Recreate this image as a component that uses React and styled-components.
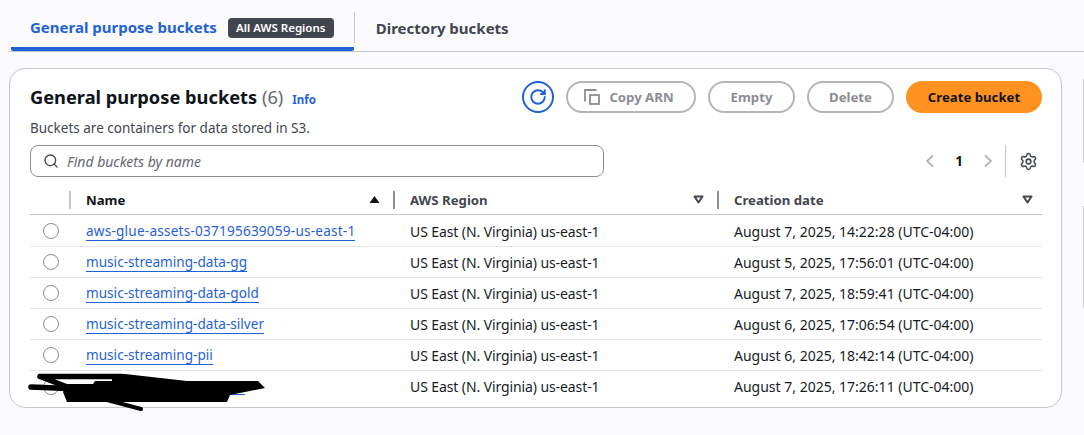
import styled, { createGlobalStyle } from "styled-components";
import { Search, Settings, RotateCw } from "lucide-react";

const Global = createGlobalStyle`
	html, body {
		margin: 0;
		background: #fbfbfe;
		font-family: "Noto Sans", "Open Sans", sans-serif;
		color: #0f141a;
	}
	* { box-sizing: border-box; }
`;

const Page = styled.div`
	position: relative;
	width: 1084px;
	height: 435px;
	overflow: hidden;
	padding-left: 9px;
`;
const Tabs = styled.div`
	display: flex;
	align-items: stretch;
	height: 52px;
	border-bottom: 1px solid #c6c6cd;
`;
const ActiveTab = styled.div`
	display: flex;
	align-items: center;
	gap: 11px;
	height: 51px;
	margin-left: 2px;
	padding: 6px 20px 0 19px;
	font-size: 15px;
	font-weight: 700;
	color: #1f62d8;
	border-bottom: 4px solid #1f62d8;
	border-radius: 2px;
`;
const PlainTab = styled.div`
	display: flex;
	align-items: center;
	height: 51px;
	padding: 8px 22px 4px 21px;
	font-size: 15px;
	font-weight: 700;
	color: #424650;
`;
const TabSep = styled.div`
	width: 1px;
	height: 31px;
	margin-top: 12px;
	background: #c6c6cd;
`;
const Badge = styled.span`
	width: 106px;
	margin-top: 3px;
	background: #424650;
	color: #fff;
	font-size: 11.5px;
	font-weight: 600;
	line-height: 20px;
	text-align: center;
	border-radius: 4px;
`;
const Card = styled.section`
	width: 1053px;
	height: 340px;
	margin-top: 16px;
	padding: 15px 19px 0 20px;
	border: 1px solid #c6c6cd;
	border-radius: 16px;
	background: #fff;
	overflow: hidden;
`;
const TopRow = styled.div`
	display: flex;
	justify-content: space-between;
	align-items: flex-start;
`;
const TitleLine = styled.div`
	display: flex;
	align-items: baseline;
	gap: 9px;
	height: 28px;
`;
const Title = styled.h2`
	margin: 0;
	font-size: 18.25px;
	line-height: 26px;
	font-weight: 700;
	span {
		color: #656871;
		font-weight: 400;
	}
`;
const Info = styled.span`
	font-size: 11.5px;
	font-weight: 700;
	color: #1f62d8;
`;
const Desc = styled.p`
	margin: 8px 0 0;
	font-size: 13.5px;
	line-height: 16px;
	color: #424650;
`;
const Actions = styled.div`
	display: flex;
	align-items: center;
	gap: 12px;
	margin-top: -3px;
`;
const RoundIcon = styled.div`
	display: flex;
	align-items: center;
	justify-content: center;
	width: 32px;
	height: 32px;
	border: 2px solid #1f62d8;
	border-radius: 50%;
	color: #1f62d8;
`;
const Button = styled.div`
	display: flex;
	align-items: center;
	justify-content: center;
	gap: 9px;
	height: 32px;
	width: ${(p) => p.$w}px;
	font-size: 13.2px;
	font-weight: 700;
	border-radius: 16px;
	border: 2px solid ${(p) => (p.$primary ? "#ff9220" : "#b4b4bb")};
	background: ${(p) => (p.$primary ? "#ff9220" : "transparent")};
	color: ${(p) => (p.$primary ? "#0f141a" : "#8c8c94")};
`;
const CopyGlyph = styled.svg`
	width: 16px;
	height: 16px;
	margin-left: -4px;
	flex: none;
`;
const ToolRow = styled.div`
	display: flex;
	justify-content: space-between;
	align-items: center;
	margin-top: 9px;
`;
const SearchBox = styled.div`
	display: flex;
	align-items: center;
	gap: 8px;
	width: 574px;
	height: 32px;
	padding-left: 12px;
	border: 1px solid #8c8c94;
	border-radius: 8px;
	font-size: 14px;
	font-style: italic;
	color: #656871;
`;
const Pager = styled.div`
	display: flex;
	align-items: center;
`;
const Chevron = styled.svg`
	width: 10px;
	height: 14px;
	flex: none;
`;
const PageNum = styled.span`
	margin: 0 20px;
	font-size: 13.5px;
	font-weight: 700;
	color: #0f141a;
`;
const PagerSep = styled.div`
	width: 1px;
	height: 32px;
	margin: 0 13px 0 12px;
	background: #c6c6cd;
`;
const Gear = styled.div`
	display: flex;
	margin-right: 4px;
	color: #424650;
`;
const Table = styled.div`
	margin-top: 9px;
	width: 1012px;
`;
const Row = styled.div`
	display: grid;
	grid-template-columns: 56px 324px 324px 1fr;
	align-items: center;
	height: 31px;
	border-bottom: 1px solid #e6e6e9;
	font-size: 14px;
	color: #161d26;
	&:last-child { border-bottom: none; }
`;
const HeadRow = styled(Row)`
	height: 29px;
	margin-bottom: 1px;
	border-bottom: 1px solid #c6c6cd;
`;
const HeadCell = styled.div`
	position: relative;
	display: flex;
	align-items: center;
	justify-content: space-between;
	padding: 0 30px 1px 0;
	font-size: 13.2px;
	font-weight: 700;
	color: ${(p) => (p.$sorted ? "#0f141a" : "#424650")};
	height: 100%;
	&:last-child { padding-right: 9px; }
	&::before {
		content: "";
		position: absolute;
		left: -17px;
		top: 5px;
		height: 18px;
		width: 2px;
		background: ${(p) => (p.$light ? "#c6c6cd" : "#8c8c94")};
	}
`;
const Tri = styled.svg`
	width: 11px;
	height: 9px;
	flex: none;
`;
const Radio = styled.div`
	width: 16px;
	height: 16px;
	margin-left: 13px;
	border: 1px solid #8c8c94;
	border-radius: 50%;
	background: #fff;
`;
const BucketLink = styled.a`
	justify-self: start;
	font-size: 13.6px;
	letter-spacing: ${(p) => (p.$long ? "0.21px" : "0")};
	color: #1f62d8;
	border-bottom: 1px solid #1f62d8;
	line-height: 18px;
`;
const RedactedLink = styled(BucketLink)`
	width: 159px;
	height: 17px;
`;
const Region = styled.div`
	letter-spacing: -0.1px;
`;
const Scribble = styled.svg`
	position: absolute;
	left: 0;
	top: 0;
	width: 1084px;
	height: 435px;
	pointer-events: none;
`;
const EdgeMark = styled.div`
	position: absolute;
	right: 0;
	top: ${(p) => p.$top}px;
	width: 1px;
	height: ${(p) => p.$h}px;
	background: #d0d0d6;
`;

const buckets = [
	["aws-glue-assets-037195639059-us-east-1", "August 7, 2025, 14:22:28 (UTC-04:00)"],
	["music-streaming-data-gg", "August 5, 2025, 17:56:01 (UTC-04:00)"],
	["music-streaming-data-gold", "August 7, 2025, 18:59:41 (UTC-04:00)"],
	["music-streaming-data-silver", "August 6, 2025, 17:06:54 (UTC-04:00)"],
	["music-streaming-pii", "August 6, 2025, 18:42:14 (UTC-04:00)"],
	[null, "August 7, 2025, 17:26:11 (UTC-04:00)"],
];

const FilledTri = () => (
	<Tri viewBox="0 0 11 9">
		<path d="M5.5 1 L10.5 8 L0.5 8 Z" fill="#0f141a" />
	</Tri>
);
const OpenTri = () => (
	<Tri viewBox="0 0 11 9">
		<path d="M1.5 1.5 L9.5 1.5 L5.5 7.5 Z" fill="none" stroke="#424650" strokeWidth="2" strokeLinejoin="round" />
	</Tri>
);

const App = () => {
	return (
		<Page>
			<Global />
			<Tabs>
				<ActiveTab>
					General purpose buckets
					<Badge>All AWS Regions</Badge>
				</ActiveTab>
				<TabSep />
				<PlainTab>Directory buckets</PlainTab>
			</Tabs>
			<Card>
				<TopRow>
					<div>
						<TitleLine>
							<Title>
								General purpose buckets <span>(6)</span>
							</Title>
							<Info>Info</Info>
						</TitleLine>
						<Desc>Buckets are containers for data stored in S3.</Desc>
					</div>
					<Actions>
						<RoundIcon>
							<RotateCw size={18} strokeWidth={2.6} />
						</RoundIcon>
						<Button $w={130}>
							<CopyGlyph viewBox="0 0 16 16">
								<path d="M1 12.5 V1 H12.5" fill="none" stroke="#8c8c94" strokeWidth="1.8" />
								<rect x="6" y="6" width="9" height="9" fill="none" stroke="#8c8c94" strokeWidth="1.8" />
							</CopyGlyph>
							Copy ARN
						</Button>
						<Button $w={87}>Empty</Button>
						<Button $w={87}>Delete</Button>
						<Button $w={136} $primary>Create bucket</Button>
					</Actions>
				</TopRow>
				<ToolRow>
					<SearchBox>
						<Search size={16} color="#424650" strokeWidth={2} />
						Find buckets by name
					</SearchBox>
					<Pager>
						<Chevron viewBox="0 0 10 14">
							<path d="M8 1.5 L2 7 L8 12.5" fill="none" stroke="#b4b4bb" strokeWidth="1.8" />
						</Chevron>
						<PageNum>1</PageNum>
						<Chevron viewBox="0 0 10 14">
							<path d="M2 1.5 L8 7 L2 12.5" fill="none" stroke="#b4b4bb" strokeWidth="1.8" />
						</Chevron>
						<PagerSep />
						<Gear>
							<Settings size={19} strokeWidth={1.9} />
						</Gear>
					</Pager>
				</ToolRow>
				<Table>
					<HeadRow>
						<div />
						<HeadCell $sorted $light>Name<FilledTri /></HeadCell>
						<HeadCell>AWS Region<OpenTri /></HeadCell>
						<HeadCell>Creation date<OpenTri /></HeadCell>
					</HeadRow>
					{buckets.map(([name, date]) => (
						<Row key={date}>
							<Radio />
							{name ? <BucketLink $long={name.length > 30}>{name}</BucketLink> : <RedactedLink />}
							<Region>US East (N. Virginia) us-east-1</Region>
							<div>{date}</div>
						</Row>
					))}
				</Table>
			</Card>
			<EdgeMark $top={79} $h={84} />
			<EdgeMark $top={206} $h={102} />
			<Scribble viewBox="0 0 1084 435">
				<path d="M68 384 L93 384 L95 381 L112 381 L112 376 L125 374 L187 381 L258 381 L265 388 L230 395 L227 402 L67 402 L63 392 Z" fill="#000" />
				<path d="M40 376.5 L122 376.5 M40 376.5 L70 388 M31 387 L80 389" fill="none" stroke="#000" strokeWidth="5.5" strokeLinecap="round" />
				<path d="M107 400 L141 409" fill="none" stroke="#000" strokeWidth="4" strokeLinecap="round" />
			</Scribble>
		</Page>
	);
};

export default App;
